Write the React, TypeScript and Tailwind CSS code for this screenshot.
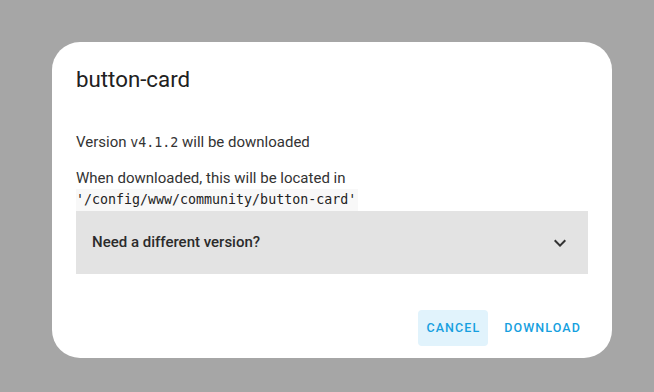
import React from "react";

export default function App() {
  const mono = { fontFamily: '"DejaVu Sans Mono", "Liberation Mono", monospace' };
  return (
    <div className="w-[654px] h-[392px] bg-[#a6a6a6] pt-[42px] pl-[52px] overflow-hidden" style={{ fontFamily: 'Roboto, "Noto Sans", sans-serif' }}>
      <div className="w-[560px] h-[316px] bg-white rounded-[28px] flex flex-col px-6">
        <h2 className="text-[22.3px] leading-[28px] text-[#212121] pt-[23px]">button-card</h2>
        <p className="mt-[39px] text-[15px] leading-[20px] text-[#333333]">
          Version <code className="text-[13.3px]" style={mono}>v4.1.2</code> will be downloaded
        </p>
        <p className="mt-[15px] text-[15px] leading-[20px] text-[#333333]">When downloaded, this will be located in</p>
        <div className="flex mt-[1px]">
          <code className="text-[13.3px] leading-[22px] bg-[#f8f8f8] pr-[2px] text-[#222]" style={mono}>'/config/www/community/button-card'</code>
        </div>
        <div className="h-[63px] bg-[#e3e3e3] flex items-center justify-between pl-4 pr-[16px]">
          <span className="text-[15px] font-medium text-[#2b2b2b]">Need a different version?</span>
          <svg width="24" height="24" viewBox="0 0 24 24" className="text-[#333]">
            <path d="M7.41 8.58L12 13.17l4.59-4.59L18 10l-6 6-6-6 1.41-1.42z" fill="currentColor" />
          </svg>
        </div>
        <div className="flex-1" />
        <div className="flex justify-end gap-2 pb-3 -mr-[1px]">
          <button className="h-[36px] px-2 rounded-[4px] bg-[#e1f3fc] text-[#169fe0] text-[12.5px] font-medium tracking-[1.1px]">CANCEL</button>
          <button className="h-[36px] px-2 rounded-[4px] text-[#169fe0] text-[12.5px] font-medium tracking-[1.1px]">DOWNLOAD</button>
        </div>
      </div>
    </div>
  );
}
